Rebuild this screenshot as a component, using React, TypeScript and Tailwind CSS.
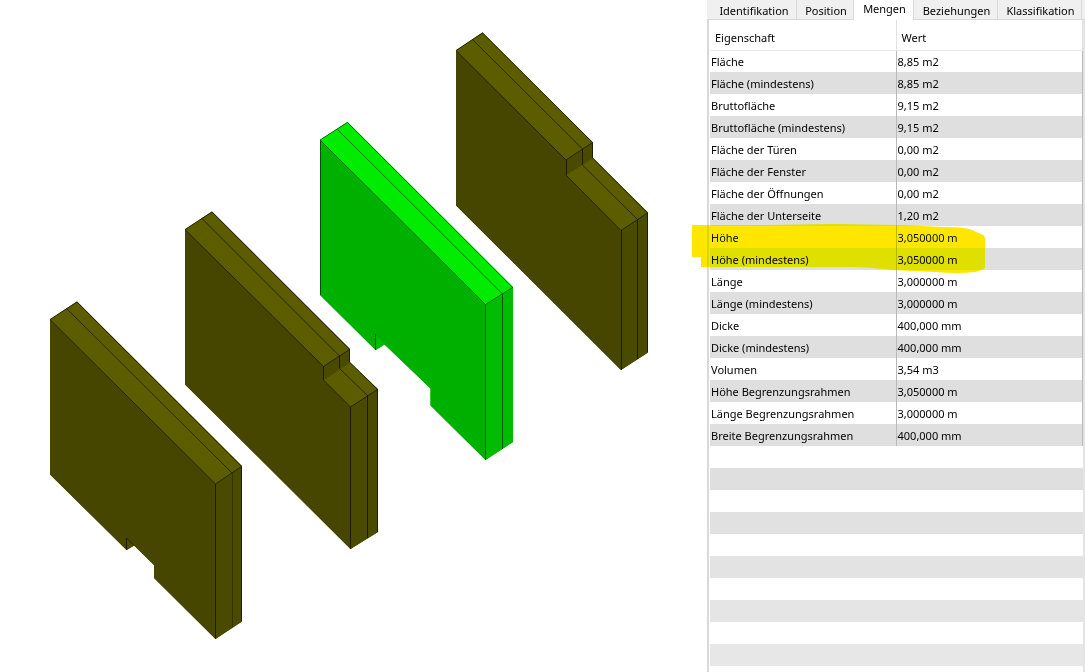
import { useState } from "react";
import clsx from "clsx";

const tabs = [
  { label: "Identifikation", width: "w-[87px]" },
  { label: "Position", width: "w-[57px]" },
  { label: "Mengen", width: "w-[60px]" },
  { label: "Beziehungen", width: "w-[84px]" },
  { label: "Klassifikation", width: "w-[84px]" },
];

const quantities = [
  ["Fläche", "8,85 m2"],
  ["Fläche (mindestens)", "8,85 m2"],
  ["Bruttofläche", "9,15 m2"],
  ["Bruttofläche (mindestens)", "9,15 m2"],
  ["Fläche der Türen", "0,00 m2"],
  ["Fläche der Fenster", "0,00 m2"],
  ["Fläche der Öffnungen", "0,00 m2"],
  ["Fläche der Unterseite", "1,20 m2"],
  ["Höhe", "3,050000 m"],
  ["Höhe (mindestens)", "3,050000 m"],
  ["Länge", "3,000000 m"],
  ["Länge (mindestens)", "3,000000 m"],
  ["Dicke", "400,000 mm"],
  ["Dicke (mindestens)", "400,000 mm"],
  ["Volumen", "3,54 m3"],
  ["Höhe Begrenzungsrahmen", "3,050000 m"],
  ["Länge Begrenzungsrahmen", "3,000000 m"],
  ["Breite Begrenzungsrahmen", "400,000 mm"],
];

const emptyStripes = ["bg-[#dfdfdf]", "bg-[#e1e1e1]", "bg-[#e3e3e3]", "bg-[#e5e5e5]", "bg-[#e7e7e7]"];

interface Wall {
  id: string;
  selected?: boolean;
  outline: string;
  front: string;
  tops: string[];
  sides: string[];
  // horizontal and sloped edges first, then the vertical ones
  edges: string;
  verticals: string;
}

const walls: Wall[] = [
  {
    id: "wall-4",
    outline: "456,50.5 482.5,32.5 593,142.5 593,158 648,212.5 648,352.5 621,370 456,205.5",
    front: "456,50.5 566,160 566,175 621,230.5 621,370 456,205.5",
    tops: ["456,50.5 482.5,32.5 593,142.5 566,160", "566,175 593,158 648,212.5 621,230.5"],
    sides: ["566,160 593,142.5 593,158 566,175", "621,230.5 648,212.5 648,352.5 621,370"],
    edges:
      "M456 50.5 482.5 33 592.5 142.5 566 160ZM472.5 39.5 582.5 149M592.5 158 647.5 213 621 230.5 566 175M582.5 165 637.5 219.5",
    verticals: "M566.5 160V175M582.5 149V165M592.5 143V158M621.5 230V370M637.5 219V359M647.5 213V352",
  },
  {
    id: "wall-3",
    selected: true,
    outline:
      "320,140 347.5,122 513,287 513,442 485.5,460 430.5,405.5 430.5,388.5 384.5,344.5 375.5,350 320,295",
    front:
      "320,140 485.5,304.5 485.5,460 430.5,405.5 430.5,388.5 384.5,344.5 375.5,350 320,295",
    tops: ["320,140 347.5,122 513,287 485.5,304.5"],
    sides: ["485.5,304.5 513,287 513,442 485.5,460", "375.5,334.5 384.5,344.5 375.5,350"],
    edges: "M320 140 347.5 122.5 512.5 287.5 485.5 304.5ZM337.5 129.5 502.5 294",
    verticals: "M375.5 334V350M485.5 304V460M502.5 294V449M320.5 140V295",
  },
  {
    id: "wall-2",
    outline: "185,229.5 212,211.5 350,349 350,362.5 378,389 378,532 350.5,549 185,384.5",
    front: "185,229.5 323.5,366.5 323.5,380 350.5,407 350.5,549 185,384.5",
    tops: ["185,229.5 212,211.5 350,349 323.5,366.5", "323.5,380 350,362.5 377.5,389 350.5,407"],
    sides: ["323.5,366.5 350,349 350,362.5 323.5,380", "350.5,407 378,389 378,532 350.5,549"],
    edges:
      "M185 229.5 212 212 349.5 349.5 323.5 366.5ZM202 218.5 339.5 356M350 362.5 377.5 389.5 350.5 407 323.5 380M339.5 368.5 367.5 395.5",
    verticals: "M323.5 366V380M339.5 356V368M349.5 349V362M350.5 407V549M367.5 395V538M377.5 389V532",
  },
  {
    id: "wall-1",
    outline: "50,319.5 77,301.5 242,466 242,621.5 215.5,639 154,578 154,565 134,545.5 126.5,550 50,474.5",
    front: "50,319.5 215.5,484 215.5,639 154,578 154,565 134,545.5 126.5,550 50,474.5",
    tops: ["50,319.5 77,301.5 242,466 215.5,484"],
    sides: ["215.5,484 242,466 242,621.5 215.5,639", "126.5,538 134,545.5 126.5,550"],
    edges: "M50 319.5 77 302 241.5 466.5 215.5 484ZM66.5 308.5 232 473M126.5 538 134 545.5",
    verticals: "M126.5 538V550M215.5 484V639M241.5 466V621",
  },
];

function WallShape({ wall }: { wall: Wall }) {
  const { selected } = wall;
  return (
    <g>
      {/* solid backing, so that no white shows between neighbouring faces */}
      <polygon points={wall.outline} fill={selected ? "#00b000" : "#464600"} />
      <polygon points={wall.front} fill={selected ? "#00b000" : "#464600"} />
      {wall.tops.map((points) => (
        <polygon key={points} points={points} fill={selected ? "#00eb00" : "#5c5c00"} />
      ))}
      {wall.sides.map((points) => (
        <polygon key={points} points={points} fill={selected ? "#00bc00" : "#4b4b00"} />
      ))}
      <g fill="none" stroke={selected ? "#005500" : "#1c1c00"}>
        <path d={wall.edges} strokeWidth="0.8" />
        <path d={wall.verticals} strokeWidth="1" />
      </g>
    </g>
  );
}

function ModelView() {
  return (
    <main className="min-w-0 flex-1">
      <svg viewBox="0 0 707 672" className="block w-full" role="img" aria-label="3D-Modell">
        {walls.map((wall) => (
          <WallShape key={wall.id} wall={wall} />
        ))}
        {/* inner layer on the end face of the first wall is fainter */}
        <path d="M232.5 473V627" stroke="#343400" fill="none" />
      </svg>
    </main>
  );
}

function QuantityTable() {
  return (
    <div className="relative">
      <table className="w-full table-fixed border-collapse text-left">
        <thead>
          <tr className="h-[30px] border-b border-[#ececec]">
            <th className="w-[186px] border-r border-[#e2e2e2] p-0 pt-1.5 pl-[5px] font-normal">Eigenschaft</th>
            <th className="border-r border-[#e2e2e2] p-0 pt-1.5 pl-[5px] font-normal">Wert</th>
          </tr>
        </thead>
        <tbody>
          {quantities.map(([name, value]) => (
            <tr key={name} className="h-[22px] even:bg-[#dfdfdf]">
              <td className="border-r border-[#b9b9b9] p-0 pt-0.5 pl-px">{name}</td>
              <td className="border-r border-[#b9b9b9] p-0 pt-0.5 pl-px">{value}</td>
            </tr>
          ))}
        </tbody>
      </table>

      {/* Marker over the height rows */}
      <svg
        viewBox="0 0 294 50"
        className="pointer-events-none absolute top-[204px] -left-[18px] h-[50px] w-[294px] mix-blend-darken"
        aria-hidden="true"
      >
        <path
          d="M0 1H75L140 0L210 1L250 3Q276 3 282 7L291 11Q293 12 293 15V44Q291 46 283 48Q268 50 243 48L200 46Q175 43 158 43H9V33H0Z"
          fill="#ffe600"
        />
      </svg>
    </div>
  );
}

export default function App() {
  const [active, setActive] = useState("Mengen");

  return (
    <div className="flex min-h-screen bg-white font-['Noto_Sans','Open_Sans',sans-serif] text-[11px] leading-4 text-black">
      <ModelView />

      <aside className="flex w-[378px] shrink-0 flex-col">
        <div role="tablist" className="flex h-5 border-b border-[#d9d9d9] bg-[#f0f0f0] pl-[3px]">
          {tabs.map(({ label, width }) => (
            <button
              key={label}
              role="tab"
              aria-selected={active === label}
              onClick={() => setActive(label)}
              className={clsx(
                "flex shrink-0 justify-center border-r border-[#d9d9d9] pl-0.5 whitespace-nowrap",
                width,
                active === label ? "h-5 bg-white pt-px" : "h-[19px] pt-[3px]"
              )}
            >
              {label}
            </button>
          ))}
        </div>

        <div className="flex flex-1 flex-col border-r-2 border-l-2 border-r-[#e4e4e4] border-l-[#d9d9d9] pl-px">
          <QuantityTable />
          {emptyStripes.map((stripe) => (
            <div key={stripe} className="pt-[22px]">
              <div className={clsx("h-[22px]", stripe)} />
            </div>
          ))}
        </div>
      </aside>
    </div>
  );
}
